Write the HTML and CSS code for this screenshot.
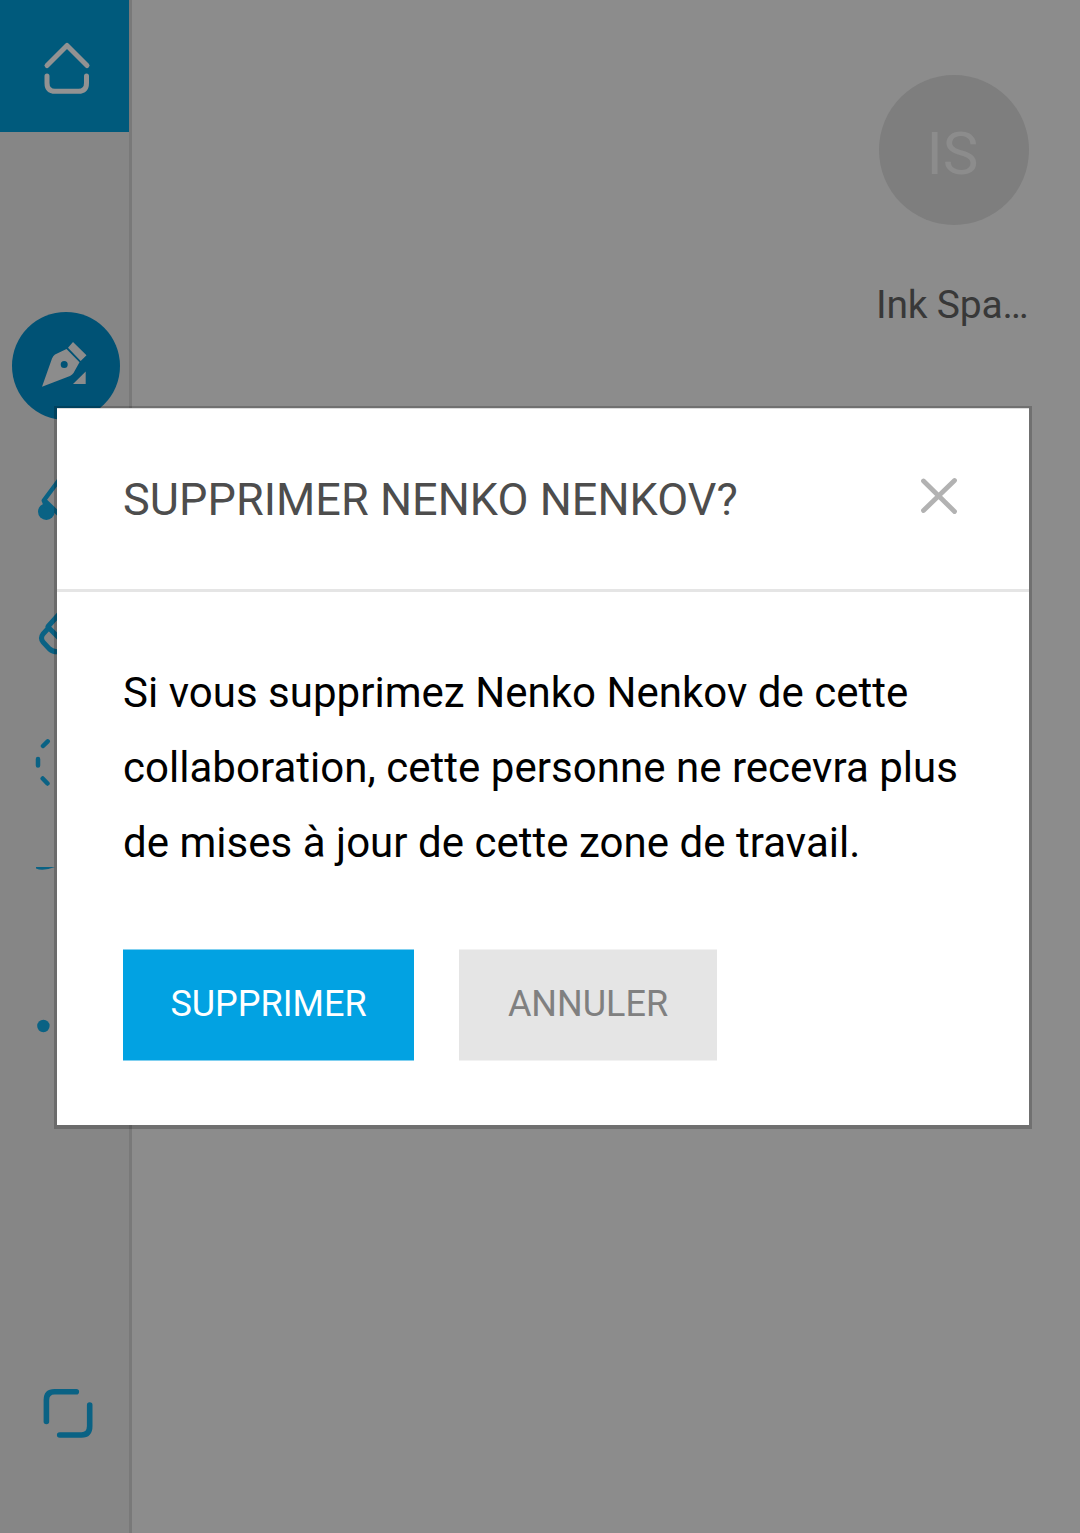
FILE: index.html
```html
<!DOCTYPE html>
<html lang="fr">
<head>
<meta charset="utf-8">
<title>Supprimer Nenko Nenkov</title>
<link rel="stylesheet" href="styles.css">
</head>
<body>
<div class="app">
  <nav class="sidebar">
    <div class="home">
      <svg class="icon" viewBox="12 12 108 108"><path class="line-light" d="M47 65.5 67 45.500 87 65.500M47 76V83Q47 91.300 55 91.300H78.500Q86.500 91.300 86.500 83V76"/></svg>
    </div>
    <div class="tools">
      <div class="tool tool-active">
        <svg class="icon" viewBox="12 312 108 108"><path class="fill-light" fill-rule="evenodd" d="M42 386.700 52 358.500Q53 356 55 354.500L66.500 349 79.500 362.300 73.500 373Q72.500 374.700 70 376ZM67.700 364.500a3.500 3.500 0 1 0-7 0 3.500 3.500 0 1 0 7 0ZM68 347.700 73 342 86.500 355.200 80.700 361ZM85.700 371.500V384H73Z"/></svg>
      </div>
      <div class="tool">
        <svg class="icon" viewBox="12 444 108 108"><circle class="fill-blue" cx="46.300" cy="511.700" r="8.300"/><path class="line-blue thin" d="M46 506 43.800 500.500 62 476M45 501 64 519"/></svg>
      </div>
      <div class="tool">
        <svg class="icon" viewBox="12 576 108 108"><path class="line-blue" d="M48 626.500 70 602M48 627 70 649M48.500 628 43 634Q40 638 43 642L49.500 649Q53.500 652.500 60 651.500"/></svg>
      </div>
      <div class="tool">
        <svg class="icon" viewBox="12 708 108 108"><path class="line-blue thin" d="M43 746 47.700 741.300M38 759V765.500M42.700 778.500 47.500 783.500"/></svg>
      </div>
      <div class="tool">
        <svg class="icon" viewBox="12 840 108 108"><path class="fill-blue" d="M36 867H55Q43 871.500 36 868.500Z"/></svg>
      </div>
      <div class="tool">
        <svg class="icon" viewBox="12 972 108 108"><circle class="fill-blue" cx="43.400" cy="1026" r="6.200"/></svg>
      </div>
    </div>
    <div class="tool tool-last">
      <svg class="icon" viewBox="12 1360 108 108"><path class="line-blue thick" d="M46.400 1421.500V1400Q46.400 1391.700 54.500 1391.700H76.300M89.700 1405V1426Q89.700 1435 81.500 1435H59.700"/></svg>
    </div>
  </nav>
  <main class="board">
    <div class="space">
      <div class="avatar">IS</div>
      <div class="space-name">Ink Spa…</div>
    </div>
  </main>
  <section class="modal" role="dialog">
    <header class="modal-header">
      <h1 class="modal-title">SUPPRIMER NENKO NENKOV?</h1>
      <svg class="close" viewBox="0 0 38 38"><path d="M3.500 4 34.500 34.500M34.500 3.500 3.500 33.500"/></svg>
    </header>
    <div class="modal-body">
      <p class="message">Si vous supprimez Nenko Nenkov de cette collaboration, cette personne ne recevra plus de mises à jour de cette zone de travail.</p>
      <div class="actions">
        <button class="button button-primary">SUPPRIMER</button>
        <button class="button button-secondary">ANNULER</button>
      </div>
    </div>
  </section>
</div>
</body>
</html>
```
FILE: styles.css
```css
* { box-sizing: border-box; }
body { margin: 0; font-family: Roboto, sans-serif; }
.app { position: relative; display: flex; width: 1080px; height: 1533px; overflow: hidden; background: #8c8c8c; }
.sidebar { display: flex; flex-direction: column; width: 132px; background: #868686; border-right: 3px solid #797979; }
.home { height: 132px; padding: 12px; background: #005a7c; }
.tools { margin-top: 168px; }
.tool { height: 132px; padding: 12px; }
.tool-last { margin-top: auto; margin-bottom: 53px; }
.icon { display: block; width: 108px; height: 108px; flex: none; }
.tool-active .icon { background: #005275; border-radius: 50%; }
.fill-light { fill: #8c8c8c; }
.fill-blue { fill: #0a6284; }
.line-light, .line-blue { fill: none; stroke-width: 5; stroke-linecap: round; stroke-linejoin: round; }
.line-light { stroke: #929292; }
.line-blue { stroke: #0a6284; }
.thin { stroke-width: 4.5; }
.thick { stroke-width: 5.6; }
.board { flex: 1; display: flex; justify-content: flex-end; padding: 75px 51px 0 0; }
.space { width: 153px; display: flex; flex-direction: column; align-items: flex-end; }
.avatar { width: 150px; height: 150px; padding-right: 3px; border-radius: 50%; background: #7e7e7e; color: #8c8c8c; font-size: 60px; line-height: 157px; text-align: center; }
.space-name { width: 153px; margin-top: 57px; font-size: 39px; line-height: 46px; letter-spacing: -0.2px; color: #383838; white-space: nowrap; }
.modal { position: absolute; left: 54px; top: 406px; width: 978px; height: 723px; border: 3px solid rgba(0, 0, 0, 0.2); border-top-width: 2px; border-bottom-width: 4px; background: #fff; background-clip: padding-box; }
.modal-header { display: flex; justify-content: space-between; align-items: flex-start; height: 184px; padding: 64px 71px 0 66px; border-top: 1px solid #dcdcdc; border-bottom: 3px solid #e5e5e5; }
.modal-title { margin: 0; font-size: 45px; line-height: 53px; letter-spacing: 0.05px; font-weight: 400; color: #4d4d4d; white-space: nowrap; }
.close { width: 38px; height: 38px; margin-top: 4px; fill: none; stroke: #b2b2b2; stroke-width: 4.800; stroke-linecap: round; }
.modal-body { padding: 63px 66px 0; }
.message { margin: 0; width: 850px; font-size: 42px; line-height: 75px; letter-spacing: 0.03px; color: #000; }
.actions { display: flex; gap: 45px; margin-top: 69px; }
.button { height: 112px; padding: 0 0 3px; border: solid; border-width: 1px 0; font-family: inherit; font-size: 36px; }
.button-primary { width: 291px; background: #02a2e2; border-color: #80d0f0; background-clip: padding-box; color: #fff; }
.button-secondary { width: 258px; background: #e5e5e5; border-color: #f2f2f2; background-clip: padding-box; color: #808080; }
```
